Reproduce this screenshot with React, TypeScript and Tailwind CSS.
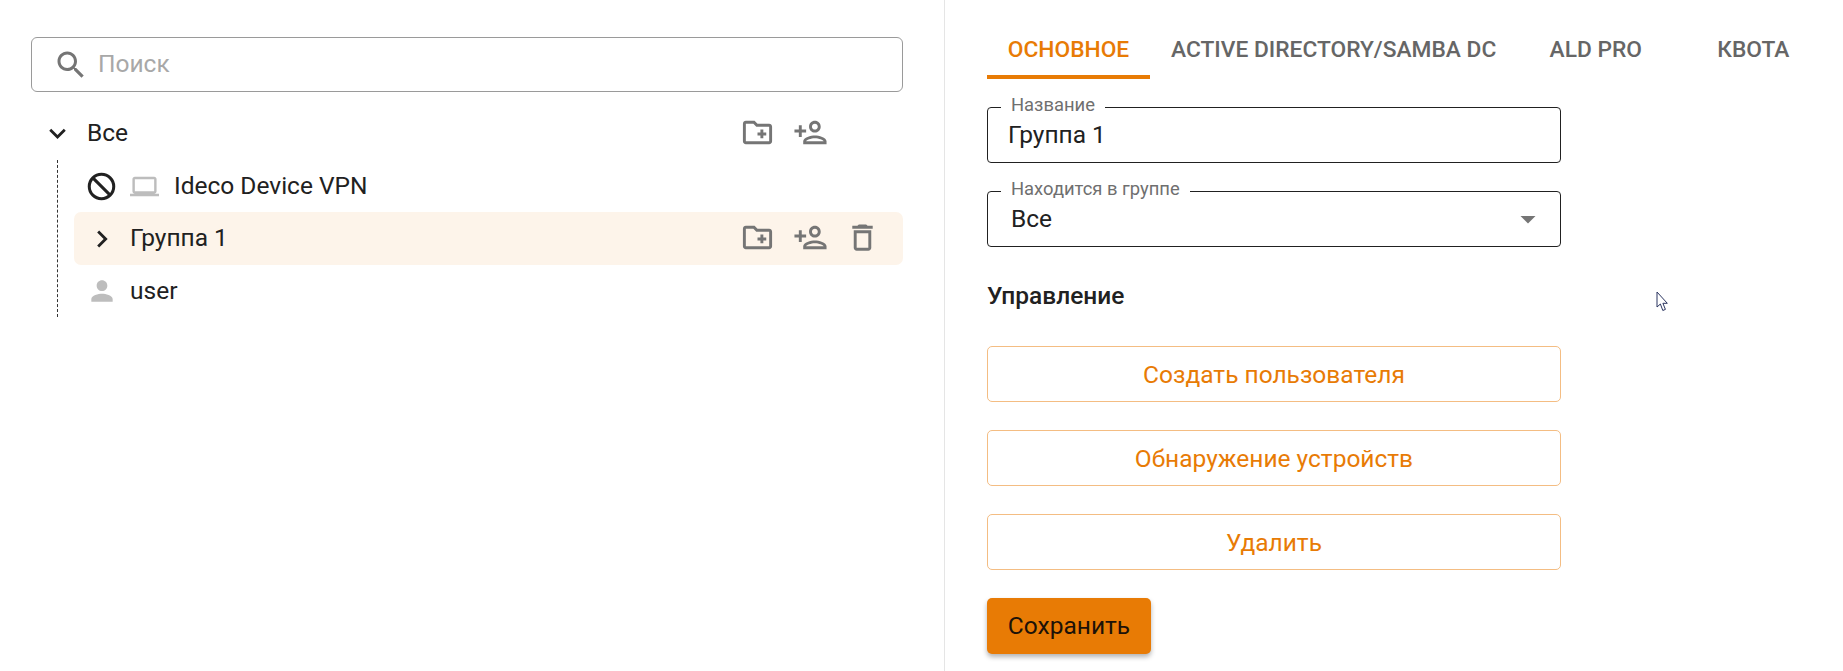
const ORANGE_LINE = 'border-[#f4bd83]'

function Icon({ d, size, className }: { d: string; size: number; className?: string }) {
  return (
    <svg width={size} height={size} viewBox="0 0 24 24" fill="currentColor" className={`shrink-0 ${className ?? ''}`}>
      <path d={d} />
    </svg>
  )
}

const paths = {
  search: 'M15.5 14h-.79l-.28-.27C15.41 12.59 16 11.11 16 9.5 16 5.91 13.09 3 9.5 3S3 5.91 3 9.5 5.91 16 9.5 16c1.61 0 3.09-.59 4.23-1.57l.27.28v.79l5 4.99L20.49 19l-4.99-5zm-6 0C7.01 14 5 11.99 5 9.5S7.01 5 9.5 5 14 7.01 14 9.5 11.99 14 9.5 14z',
  expand: 'M16.59 8.59L12 13.17 7.41 8.59 6 10l6 6 6-6z',
  chevron: 'M10 6L8.59 7.41 13.17 12l-4.58 4.59L10 18l6-6z',
  laptop: 'M20 18c1.1 0 1.99-.9 1.99-2L22 6c0-1.1-.9-2-2-2H4c-1.1 0-2 .9-2 2v10c0 1.1.9 2 2 2H0v2h24v-2h-4zM4 6h16v10H4V6z',
  person: 'M12 12c2.21 0 4-1.79 4-4s-1.79-4-4-4-4 1.79-4 4 1.79 4 4 4zm0 2c-2.67 0-8 1.34-8 4v2h16v-2c0-2.66-5.33-4-8-4z',
  folderAdd: 'M20 6h-8l-2-2H4c-1.11 0-1.99.89-1.99 2L2 18c0 1.11.89 2 2 2h16c1.11 0 2-.89 2-2V8c0-1.11-.89-2-2-2zm0 12H4V6h5.17l2 2H20v10zm-8-4h2v2h2v-2h2v-2h-2v-2h-2v2h-2z',
  personAdd: 'M15 12c2.21 0 4-1.79 4-4s-1.79-4-4-4-4 1.79-4 4 1.79 4 4 4zm0-6c1.1 0 2 .9 2 2s-.9 2-2 2-2-.9-2-2 .9-2 2-2zm0 8c-2.67 0-8 1.34-8 4v2h16v-2c0-2.66-5.33-4-8-4zm-6 4c.22-.72 3.31-2 6-2 2.7 0 5.8 1.29 6 2H9zm-3-3v-3h3v-2H6V7H4v3H1v2h3v3h2z',
  trash: 'M6 19c0 1.1.9 2 2 2h8c1.1 0 2-.9 2-2V7H6v12zM8 9h8v10H8V9zm7.5-5l-1-1h-5l-1 1H5v2h14V4h-3.5z',
  dropdown: 'M7 10l5 5 5-5z',
}

// the blocked sign has its bar running top-left to bottom-right
function BlockIcon() {
  return (
    <svg width={33} height={33} viewBox="0 0 24 24" fill="none" stroke="#212121" strokeWidth={2.2} className="shrink-0 ml-[11px]">
      <circle cx="12" cy="12" r="8.9" />
      <path d="M5.7 5.7l12.6 12.6" />
    </svg>
  )
}

function RowActions({ withDelete }: { withDelete?: boolean }) {
  return (
    <div className="ml-auto flex items-center pr-[14px] pb-[2px] text-[#757575]">
      <span className="w-[52.5px] flex justify-center"><Icon d={paths.folderAdd} size={35} /></span>
      <span className="w-[52.5px] flex justify-center"><Icon d={paths.personAdd} size={35} /></span>
      <span className="w-[52.5px] flex justify-center">
        {withDelete && <Icon d={paths.trash} size={35} />}
      </span>
    </div>
  )
}

function Tree() {
  return (
    <div className="mt-[15px] text-[24.5px] text-[#212121]">
      <div className="flex items-center h-[53px]">
        <Icon d={paths.expand} size={33} className="ml-[10px]" />
        <span className="ml-[13px]">Все</span>
        <RowActions />
      </div>
      <div className="ml-[26px] border-l border-dashed border-[#333] h-[157px]">
        <div className="ml-[16px]">
          <div className="flex items-center h-[52px]">
            <BlockIcon />
            <Icon d={paths.laptop} size={29} className="ml-[12px] text-[#bdbdbd]" />
            <span className="ml-[15px]">Ideco Device VPN</span>
          </div>
          <div className="flex items-center h-[53px] rounded-[7px] bg-[#fdf4ea]">
            <Icon d={paths.chevron} size={34} className="ml-[11px]" />
            <span className="ml-[11px]">Группа 1</span>
            <RowActions withDelete />
          </div>
          <div className="flex items-center h-[52px]">
            <Icon d={paths.person} size={32} className="ml-[12px] text-[#bdbdbd]" />
            <span className="ml-[12px]">user</span>
          </div>
        </div>
      </div>
    </div>
  )
}

function Field({ label, value, select }: { label: string; value: string; select?: boolean }) {
  return (
    <div className="relative h-[56px] w-[574px] rounded-[4px] border border-[#212121] flex items-center justify-between">
      <span className="absolute -top-[13px] left-[13px] bg-white px-[10px] text-[18.4px] leading-[20px] text-[#6f6f6f]">
        {label}
      </span>
      <span className={`text-[24.5px] mt-[1px] ${select ? 'pl-[23px]' : 'pl-[20px]'}`}>{value}</span>
      {select && <Icon d={paths.dropdown} size={36} className="mr-[14px] text-[#757575]" />}
    </div>
  )
}

function OutlineButton({ label }: { label: string }) {
  return (
    <button className={`h-[56px] w-[574px] pt-[2px] rounded-[5px] border ${ORANGE_LINE} text-[24.5px] text-[#e87b05]`}>
      {label}
    </button>
  )
}

export default function App() {
  return (
    <div className="flex h-[671px] w-[1843px] overflow-hidden bg-white text-[#212121] font-['Roboto',sans-serif]">
      <div className="w-[945px] shrink-0 border-r border-[#e5e5e5] pl-[31px] pr-[41px] pt-[37px]">
        <div className="flex items-center h-[55px] rounded-[6px] border border-[#9a9a9a]">
          <Icon d={paths.search} size={36} className="ml-[21px] text-[#757575]" />
          <span className="ml-[9px] text-[24.5px] text-[#a8a8a8]">Поиск</span>
        </div>
        <Tree />
      </div>

      <div className="relative flex-1 pl-[42px]">
        <div className="flex h-[79px] text-[22.75px] font-medium text-[#666666] uppercase">
          <div className="flex items-center justify-center w-[163px] pt-[26px] text-[#e87b05] border-b-[4px] border-[#e87b05]">
            Основное
          </div>
          <div className="flex items-center justify-center px-[21px] pt-[26px] pb-[4px]">Active Directory/Samba DC</div>
          <div className="flex items-center justify-center w-[157px] pt-[26px] pb-[4px]">ALD PRO</div>
          <div className="flex items-center justify-center w-[158px] pt-[26px] pb-[4px]">Квота</div>
        </div>

        <div className="mt-[28px] flex flex-col gap-[28px]">
          <Field label="Название" value="Группа 1" />
          <Field label="Находится в группе" value="Все" select />
        </div>

        <div className="mt-[35px] h-[28px] text-[24.5px] leading-[28px] font-medium">Управление</div>

        <div className="mt-[36px] flex flex-col gap-[28px] items-start">
          <OutlineButton label="Создать пользователя" />
          <OutlineButton label="Обнаружение устройств" />
          <OutlineButton label="Удалить" />
          <button className="h-[56px] w-[164px] rounded-[5px] bg-[#e87b05] text-[24.5px] text-[#1c1208] shadow-[0_3px_5px_rgba(0,0,0,0.3)]">
            Сохранить
          </button>
        </div>

        {/* mouse pointer caught in the capture */}
        <svg width="14" height="21" viewBox="0 0 14 21" className="absolute left-[711px] top-[291px]">
          <path d="M1 1v15l3.4-3 2.4 6.5 2.6-1.1-2.5-6.1h4.4z" fill="#fff" stroke="#2b3560" strokeWidth="1" />
        </svg>
      </div>
    </div>
  )
}
